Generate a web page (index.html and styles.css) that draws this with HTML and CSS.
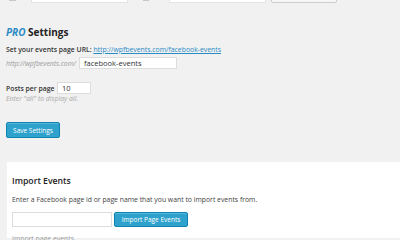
FILE: index.html
```html
<!DOCTYPE html>
<html lang="en">
<head>
    <meta charset="UTF-8">
    <title>Events Settings</title>
    <link rel="stylesheet" href="styles.css">
</head>
<body>

    <!-- Top row (cut off by the window) -->
    <div class="top-row">
        <span class="top-label"></span>
        <input class="top-input" type="text">
        <span class="top-label second"></span>
        <input class="top-input" type="text">
        <button class="top-btn"></button>
    </div>

    <!-- Pro settings -->
    <div class="settings">
        <h2><em>PRO</em> Settings</h2>

        <p class="url-line">
            <strong>Set your events page URL:</strong>
            <a href="#">http://wpfbevents.com/facebook-events</a>
        </p>
        <div class="slug-row">
            <span class="slug-prefix">http://wpfbevents.com/</span>
            <input class="slug-input" type="text" value="facebook-events">
        </div>

        <div class="posts-row">
            <strong>Posts per page</strong>
            <input class="posts-input" type="text" value="10">
        </div>
        <p class="hint">Enter "all" to display all.</p>

        <button class="btn-primary save-btn">Save Settings</button>
    </div>

    <!-- Import panel -->
    <div class="panel">
        <h3>Import Events</h3>
        <p class="panel-text">Enter a Facebook page id or page name that you want to import events from.</p>
        <div class="import-row">
            <input class="import-input" type="text">
            <button class="btn-primary import-btn">Import Page Events</button>
        </div>
        <p class="panel-more">Import page events</p>
    </div>

</body>
</html>
```

FILE: styles.css
```css
body {
    margin: 0;
    background-color: #f1f1f1;
    font-family: 'Open Sans', sans-serif;
    color: #444;
    font-size: 6.85px;
    overflow: hidden;
    width: 400px;
    height: 240px;
}

input {
    font-family: 'Open Sans', sans-serif;
    border: 1px solid #ddd;
    background: #fff;
    box-sizing: border-box;
    padding: 0 4px;
    outline: none;
    color: #333;
}

button {
    font-family: 'Open Sans', sans-serif;
    cursor: pointer;
}

.top-row {
    display: flex;
    align-items: flex-end;
    height: 3px;
    overflow: hidden;
    padding-left: 9px;
}

.top-label {
    width: 7px;
    height: 1px;
    margin-right: 15px;
    align-self: flex-start;
    background: #c8c8c8;
}

.top-label.second {
    margin-left: 15px;
    width: 6px;
    margin-right: 20px;
}

.top-input {
    width: 97px;
    height: 12px;
    border-color: #e4e4e4;
}

.top-btn {
    width: 66px;
    height: 12px;
    margin-left: 5px;
    background: #f7f7f7;
    border: 1px solid #ccc;
    border-radius: 2px;
}

.settings {
    padding: 0 6px;
}

.settings h2 {
    margin: 22px 0 0;
    font-size: 10px;
    font-weight: 700;
    color: #222;
    line-height: 14px;
}

.settings h2 em {
    color: #2a8ac4;
    font-weight: 700;
}

.url-line {
    margin: 6px 0 0;
    line-height: 10px;
}

.url-line strong {
    font-weight: 600;
    color: #333;
}

.url-line a {
    color: #2a8ac4;
}

.slug-row {
    display: flex;
    align-items: center;
    margin-top: 2px;
}

.slug-prefix {
    font-style: italic;
    color: #999;
    width: 73px;
}

.slug-input {
    width: 98px;
    height: 12px;
    font-size: 7.5px;
}

.posts-row {
    display: flex;
    align-items: center;
    margin-top: 13px;
}

.posts-row strong {
    font-weight: 600;
    color: #333;
    width: 51px;
}

.posts-input {
    width: 34px;
    height: 12px;
    font-size: 7.5px;
}

.hint {
    margin: 0;
    font-style: italic;
    color: #aaa;
    line-height: 10px;
}

.btn-primary {
    background-color: #2ea2cc;
    border: 1px solid #0f84b0;
    color: #fff;
    border-radius: 2px;
    font-size: 6.5px;
    padding: 0;
    box-shadow: inset 0 1px 0 rgba(120, 200, 230, 0.5);
}

.save-btn {
    width: 54px;
    height: 16px;
    margin-top: 18px;
}

.panel {
    background-color: #fff;
    margin: 24px 0 0 7px;
    padding: 12px 5px 0;
    height: 64px;
}

.panel h3 {
    margin: 0;
    font-size: 8.7px;
    font-weight: 600;
    color: #222;
    line-height: 14px;
}

.panel-text {
    margin: 7px 0 0;
    line-height: 10px;
}

.import-row {
    display: flex;
    margin-top: 7px;
}

.import-input {
    width: 100px;
    height: 15px;
}

.import-btn {
    width: 74px;
    height: 15px;
    margin-left: 2px;
}

.panel-more {
    margin: 7px 0 0;
    color: #999;
    line-height: 10px;
}
```
